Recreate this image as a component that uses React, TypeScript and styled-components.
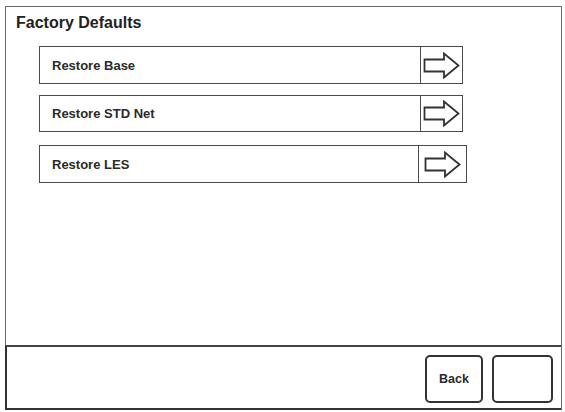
import React from "react";
import styled, { createGlobalStyle } from "styled-components";

const GlobalStyle = createGlobalStyle`
  html, body {
    margin: 0;
    padding: 0;
    background: #ffffff;
    font-family: "Liberation Sans", Arial, sans-serif;
  }
`;

const Screen = styled.div`
  width: 565px;
  height: 412px;
  padding: 6px 3px 2px 5px;
  box-sizing: border-box;
`;

const Frame = styled.div`
  height: 100%;
  display: flex;
  flex-direction: column;
  border: 1px solid #6a6a6a;
  box-sizing: border-box;
`;

const Content = styled.div`
  flex: 1;
  display: flex;
  flex-direction: column;
`;

const Title = styled.h1`
  margin: 0;
  padding: 7px 0 0 10px;
  height: 31px;
  box-sizing: border-box;
  font-size: 16px;
  line-height: 18px;
  font-weight: bold;
  color: #222;
`;

const List = styled.div`
  display: flex;
  flex-direction: column;
  padding: 8px 0 0 33px;
`;

const Row = styled.div<{ $width: number; $height: number; $top: number }>`
  display: flex;
  width: ${({ $width }) => $width}px;
  height: ${({ $height }) => $height}px;
  margin-top: ${({ $top }) => $top}px;
  border: 1px solid #4a4a4a;
  box-sizing: border-box;
  cursor: pointer;
`;

const Label = styled.div`
  flex: 1;
  display: flex;
  align-items: center;
  padding-left: 12px;
  font-size: 13px;
  font-weight: bold;
  color: #2a2a2a;
  border-right: 1px solid #4a4a4a;
`;

const Go = styled.div<{ $width: number }>`
  width: ${({ $width }) => $width}px;
  display: flex;
  align-items: center;
  justify-content: center;
`;

const Footer = styled.div`
  height: 65px;
  display: flex;
  justify-content: flex-end;
  align-items: center;
  gap: 9px;
  padding-right: 8px;
  border-top: 2px solid #444;
  border-left: 2px solid #333;
  border-bottom: 2px solid #333;
  margin-left: -1px;
  margin-bottom: -1px;
  box-sizing: border-box;
`;

const SoftKey = styled.button<{ $width: number }>`
  width: ${({ $width }) => $width}px;
  height: 48px;
  margin-top: 2px;
  background: #fff;
  border: 2px solid #333;
  border-radius: 5px;
  font-family: "Liberation Sans", Arial, sans-serif;
  font-size: 12.5px;
  font-weight: bold;
  color: #2a2a2a;
  padding: 0;
`;

const Arrow = () => (
  <svg width="37" height="27" viewBox="0 0 37 27">
    <path
      d="M1.5 7.5 H21 V1.5 L35.5 13.5 L21 25.5 V19.5 H1.5 Z"
      fill="#fff"
      stroke="#333"
      strokeWidth="1.8"
      strokeLinejoin="miter"
    />
  </svg>
);

const items = [
  { label: "Restore Base", width: 424, go: 41, height: 38, top: 0 },
  { label: "Restore STD Net", width: 424, go: 41, height: 37, top: 11 },
  { label: "Restore LES", width: 428, go: 47, height: 38, top: 13 },
];

export default function App() {
  return (
    <>
      <GlobalStyle />
      <Screen>
        <Frame>
          <Content>
            <Title>Factory Defaults</Title>
            <List>
              {items.map((item) => (
                <Row
                  key={item.label}
                  $width={item.width}
                  $height={item.height}
                  $top={item.top}
                >
                  <Label>{item.label}</Label>
                  <Go $width={item.go}>
                    <Arrow />
                  </Go>
                </Row>
              ))}
            </List>
          </Content>
          <Footer>
            <SoftKey $width={58}>Back</SoftKey>
            <SoftKey $width={61} />
          </Footer>
        </Frame>
      </Screen>
    </>
  );
}
